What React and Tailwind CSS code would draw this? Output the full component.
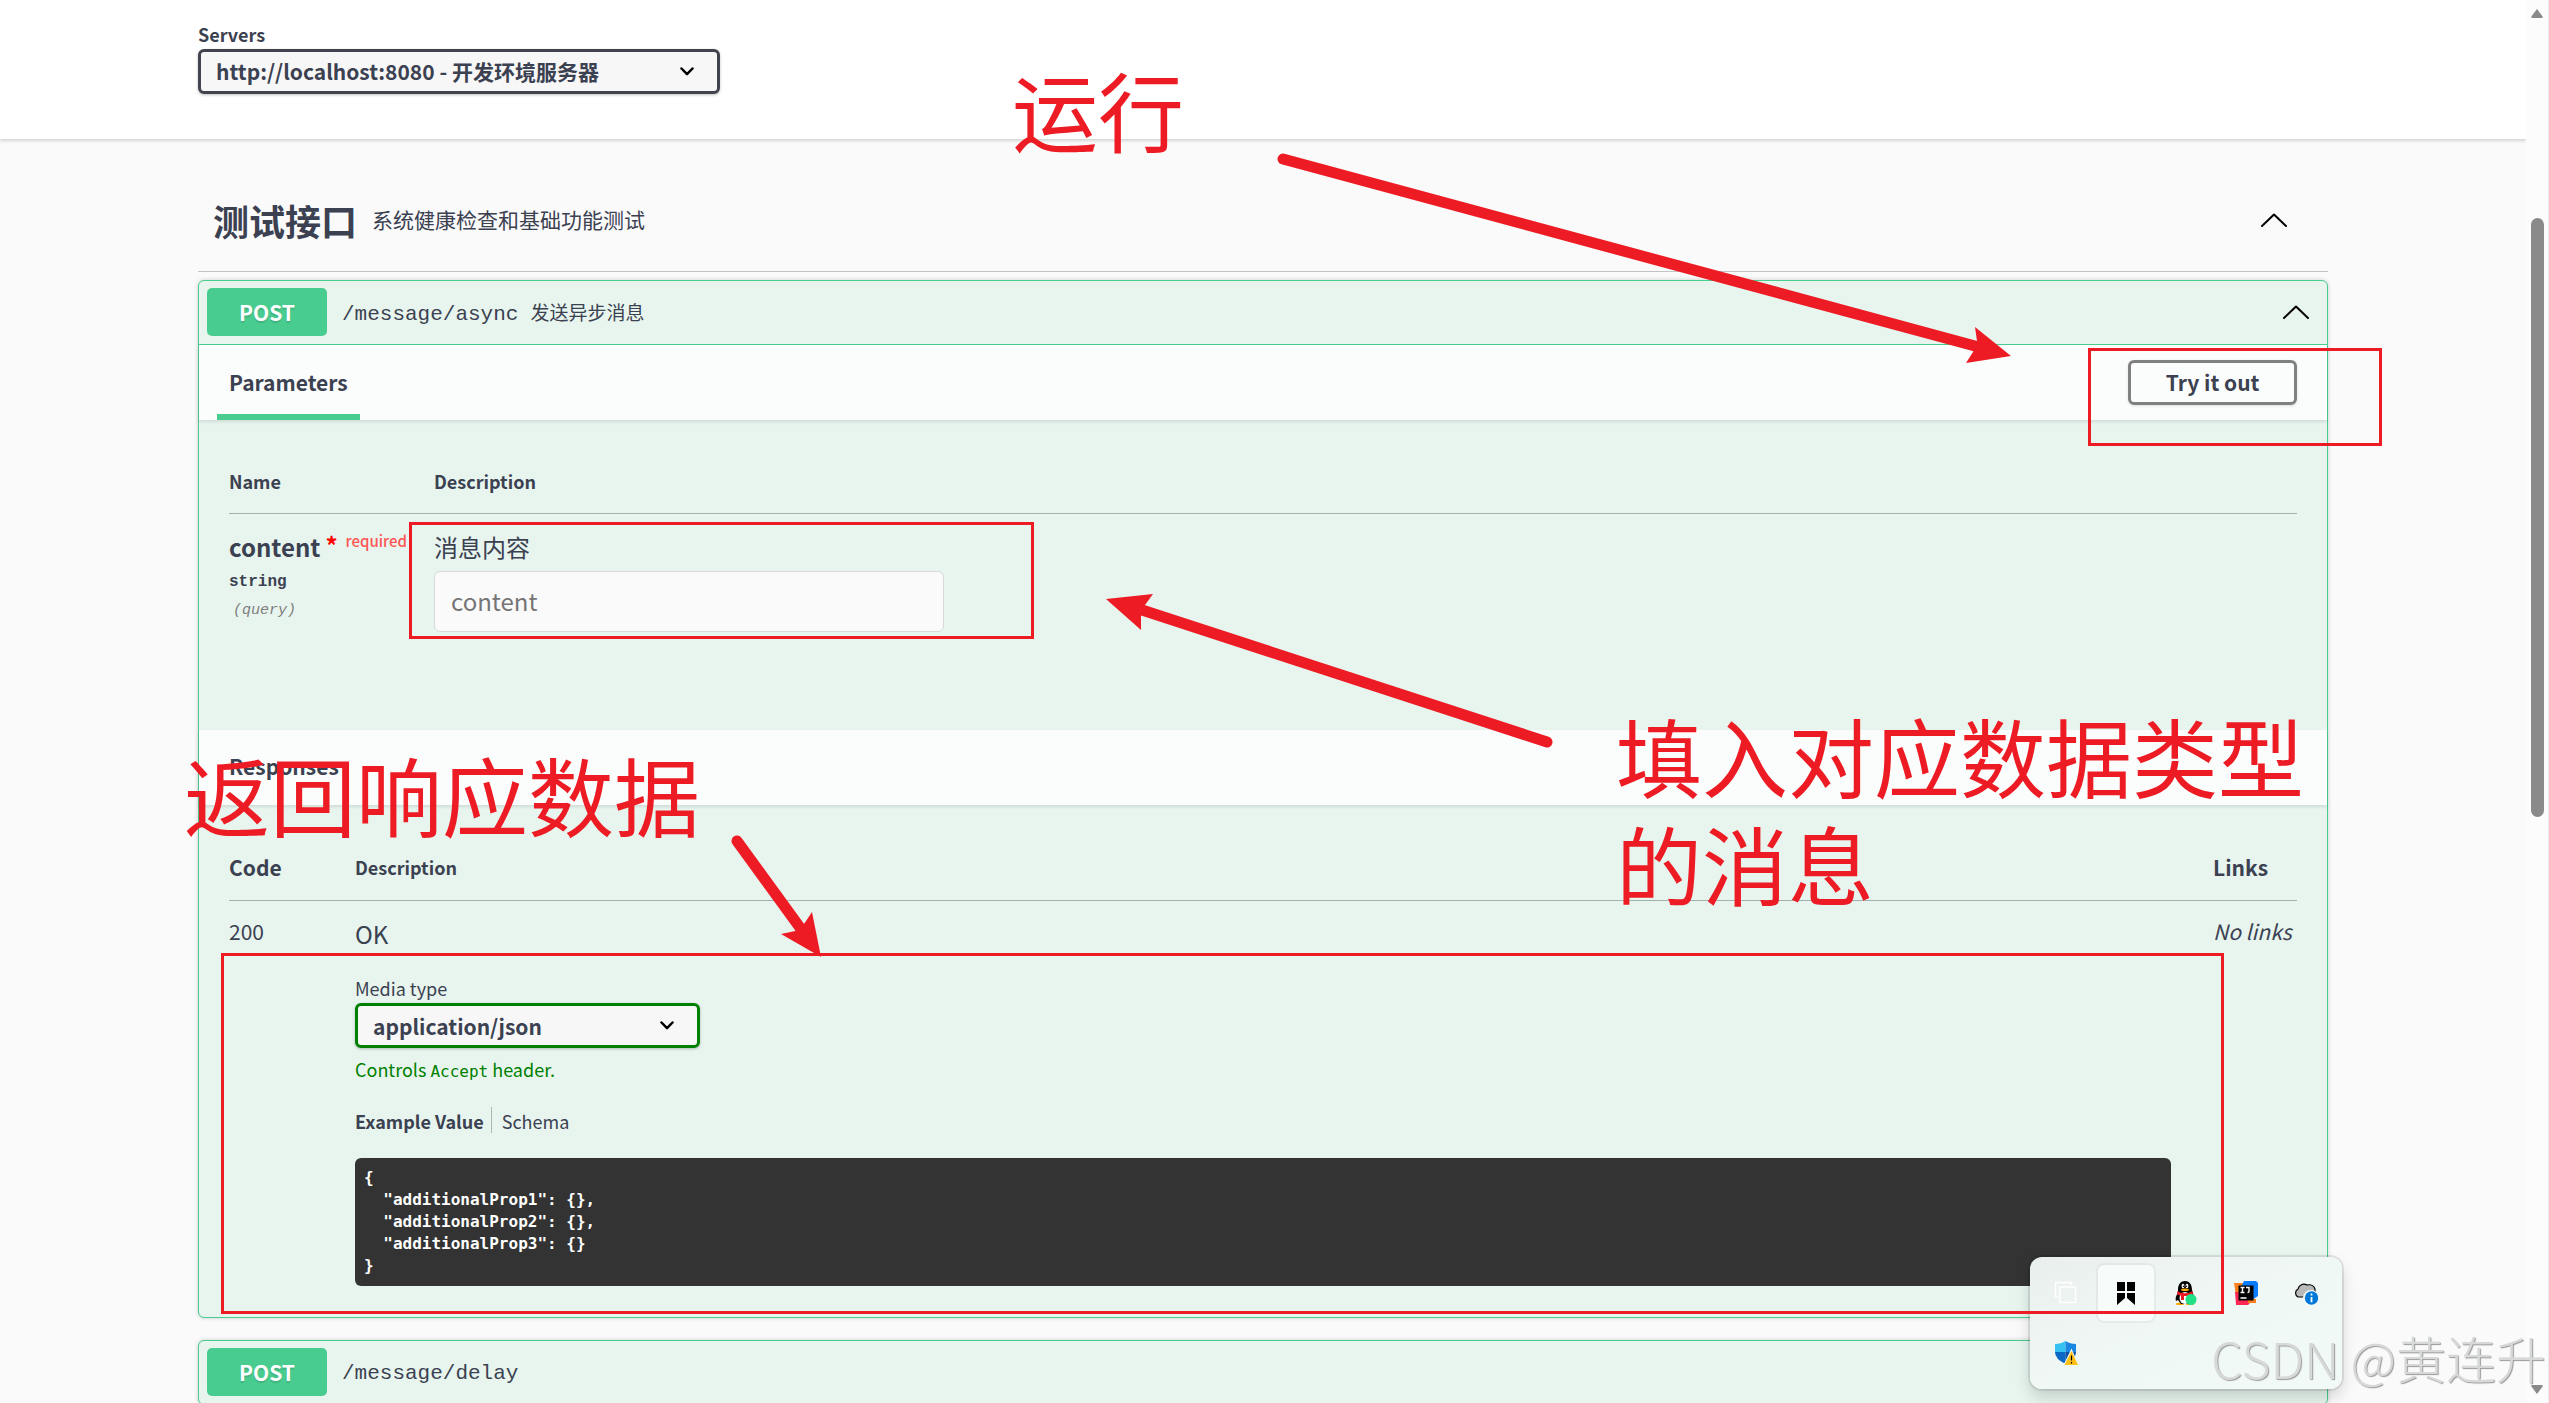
const exampleValue = `{
  "additionalProp1": {},
  "additionalProp2": {},
  "additionalProp3": {}
}`;

function ArrowUp() {
  return (
    <svg className="h-[14px] w-[26px]" viewBox="0 0 26 14" fill="none" stroke="#000" strokeWidth="2" strokeLinecap="round" strokeLinejoin="round">
      <path d="M1 13 13 1.5 25 13" />
    </svg>
  );
}

function Select({ id, value, className }) {
  return (
    <div className={`relative ${className}`}>
      <select
        id={id}
        className="h-[45px] w-full appearance-none rounded-md border-3 border-inherit bg-[#f7f7f7] pt-px pr-14 pl-[15px] text-[21px] font-bold shadow-[0_1px_3px_rgba(0,0,0,0.25)]"
      >
        <option>{value}</option>
      </select>
      <svg className="pointer-events-none absolute right-[26px] top-[18px] h-[9px] w-[14px]" viewBox="0 0 14 9" fill="none" stroke="#000" strokeWidth="2.5" strokeLinecap="round" strokeLinejoin="round">
        <path d="M1.5 1.5 7 7.2l5.500-5.700" />
      </svg>
    </div>
  );
}

function Summary({ path, description, open }) {
  return (
    <div className={`flex items-center pt-[7px] pr-[18px] pb-2 pl-2 ${open ? 'border-b border-[#49cc90]' : ''}`}>
      <button className="h-12 w-[120px] rounded-[5px] bg-[#49cc90] pt-px text-[21px] font-bold text-white [text-shadow:0_2px_1px_rgba(0,0,0,0.12)]">POST</button>
      <div className="ml-[15px] flex items-baseline gap-3 pt-1">
        <span className="font-['Liberation_Mono',monospace] text-[21px]">{path}</span>
        <span className="text-[19px]">{description}</span>
      </div>
      <button className="ml-auto" aria-label="toggle operation">
        <ArrowUp />
      </button>
    </div>
  );
}

function SectionHeader({ children }) {
  return (
    <div className="flex h-[75px] items-center justify-between bg-white/80 pr-[30px] pl-[18px] shadow-[0_2px_3px_rgba(0,0,0,0.1)]">
      {children}
    </div>
  );
}

function Parameters() {
  return (
    <>
      <SectionHeader>
        <h4 className="flex h-full items-center px-3 text-[21px] font-bold shadow-[inset_0_-6px_0_#49cc90]">Parameters</h4>
        <button className="h-[45px] w-[169px] rounded-md border-3 border-[#808080] text-[21px] font-bold shadow-[0_1px_3px_rgba(0,0,0,0.12)]">Try it out</button>
      </SectionHeader>
      <div className="px-[30px] pt-[30px] pb-[98px]">
        <table className="w-full text-left">
          <thead>
            <tr className="h-[63px] border-b border-[#a3b1ae] text-lg">
              <th className="w-[205px] font-bold">Name</th>
              <th className="font-bold">Description</th>
            </tr>
          </thead>
          <tbody>
            <tr className="align-top">
              <td className="pt-[15px]">
                <div className="flex text-2xl leading-9 font-bold whitespace-nowrap">
                  <label htmlFor="content">content</label>
                  <span className="ml-[5px] leading-8 text-[#f00]">*</span>
                  <span className="ml-2 text-[15px] leading-6 font-medium text-[#f55]">required</span>
                </div>
                <div className="mt-[5px] font-['Liberation_Mono',monospace] text-base leading-6 font-bold">string</div>
                <div className="mt-[5px] pl-1 font-['Liberation_Mono',monospace] text-[15px] leading-6 text-[#808080] italic">(query)</div>
              </td>
              <td className="pt-[15px]">
                <p className="text-2xl leading-9">消息内容</p>
                <input
                  id="content"
                  type="text"
                  placeholder="content"
                  className="mt-[6px] block h-[61px] w-[510px] rounded-md border border-[#d9d9d9] bg-[#fafafa] px-4 pb-px text-2xl placeholder:text-[#757575]"
                />
              </td>
            </tr>
          </tbody>
        </table>
      </div>
    </>
  );
}

function Responses() {
  return (
    <>
      <SectionHeader>
        <h4 className="px-3 text-[21px] font-bold">Responses</h4>
      </SectionHeader>
      <div className="px-[30px] pt-[30px] pb-[31px]">
        <table className="w-full text-left">
          <thead>
            <tr className="h-[66px] border-b border-[#a3b1ae] text-[21px]">
              <th className="w-[126px] font-bold">Code</th>
              <th className="text-lg font-bold">Description</th>
              <th className="w-[84px] font-bold">Links</th>
            </tr>
          </thead>
          <tbody>
            <tr className="align-top text-[21px] leading-[30px]">
              <td className="pt-[15px]">200</td>
              <td className="pt-[15px] pr-[42px]">
                <p className="text-2xl leading-9">OK</p>
                <label htmlFor="media-type" className="mt-6 block text-lg leading-6">Media type</label>
                <Select id="media-type" value="application/json" className="mt-[3px] w-[345px] border-[#008000]" />
                <p className="mt-[9px] text-lg leading-6 text-[#008000]">
                  Controls <code className="font-['DejaVu_Sans_Mono',monospace] text-base leading-6">Accept</code> header.
                </p>
                <div className="mt-[23px] flex h-[26px] items-center text-lg">
                  <button className="h-full pr-[7px] font-bold">Example Value</button>
                  <button className="h-full border-l border-[#a9b8b3] pl-[10px]">Schema</button>
                </div>
                <pre className="mt-[25px] rounded-md bg-[#333] px-[9px] py-[9px] font-['DejaVu_Sans_Mono',monospace] text-base leading-[22px] font-bold text-white">
                  {exampleValue}
                </pre>
              </td>
              <td className="pt-[15px] whitespace-nowrap italic">No links</td>
            </tr>
          </tbody>
        </table>
      </div>
    </>
  );
}

function Scrollbar() {
  return (
    <div className="flex w-[23px] shrink-0 flex-col items-center justify-between border-r border-[#ebebeb] bg-[#fcfcfc] pt-[9px] pb-[9px]">
      <svg className="h-[9px] w-3" viewBox="0 0 12 9" fill="#8a8a8a">
        <path d="M6 0 12 8 11 9H1L0 8z" />
      </svg>
      <div className="mt-[200px] h-[599px] w-[13px] rounded-full bg-[#8a8a8a]" />
      <svg className="mt-auto h-[9px] w-3" viewBox="0 0 12 9" fill="#8a8a8a">
        <path d="M6 9 12 1 11 0H1L0 1z" />
      </svg>
    </div>
  );
}

function Tray() {
  return (
    <div className="absolute right-[207px] bottom-[14px] grid grid-cols-[repeat(5,60px)] grid-rows-[repeat(2,60px)] place-items-center rounded-xl bg-linear-to-br from-[#e9efec] via-[#f0f8f5] to-[#f2faf7] p-[6px] shadow-[0_0_0_2px_rgba(0,0,0,0.09),0_8px_16px_rgba(0,0,0,0.16)]">
      <svg className="size-6" viewBox="0 0 24 24" fill="none" stroke="#fff" strokeWidth="1.500">
        <path d="M4 16H1.500V1.500H17V4M6 6h15.500v15.500H6z" />
      </svg>
      <div className="flex size-[56px] items-center justify-center rounded-md bg-[#f7fbfa] shadow-[0_0_0_2px_rgba(0,0,0,0.04)]">
        <svg className="size-6" viewBox="0 0 24 24">
          <path d="M3 1h8v9H3zM13 1h8v9h-8zM3 12h8v5l-8 7zM13 12h8v12l-8-7z" />
        </svg>
      </div>
      <svg className="size-6" viewBox="0 0 24 24">
        <ellipse cx="6" cy="23" rx="4" ry="1.500" fill="#f9a602" />
        <ellipse cx="16" cy="23" rx="4" ry="1.500" fill="#f9a602" />
        <path d="M4 9C4 3 7 0 11 0s7 3 7 9l2 7-2 3-4 4H7l-3-4-2 1c-1-3 0-5 2-8z" fill="#000" />
        <ellipse cx="11" cy="17" rx="5.500" ry="6" fill="#fff" />
        <ellipse cx="9" cy="5" rx="1.400" ry="2.200" fill="#fff" />
        <ellipse cx="13" cy="5" rx="1.400" ry="2.200" fill="#fff" />
        <circle cx="9.400" cy="5.200" r=".7" />
        <circle cx="12.600" cy="5.200" r=".7" />
        <ellipse cx="11" cy="8.800" rx="4" ry="1.300" fill="#f9a602" />
        <path d="M3.500 10c4 3 11 3 15 0l.5 3c-3 2-6 2-9 2v4H7v-4.500c-1.500 0-3-.5-4-1.500z" fill="#eb1923" />
        <circle cx="17" cy="18.500" r="5.500" fill="#20df84" />
      </svg>
      <svg className="size-6" viewBox="0 0 24 24">
        <path d="M0 2h9v9L2 15z" fill="#fc801d" />
        <path d="M1 11h8l9 9-4 4H2z" fill="#fe2857" />
        <path d="M14 18h8v4h-8z" fill="#fc801d" />
        <path d="M10 0h12l2 2v13l-6 4L6 8z" fill="#087cfa" />
        <path d="M4.500 4.500h15v15h-15z" />
        <path d="M6.500 6.500h4M8.500 6.500v5M6.500 11.500h4M12 6.500h3v4q0 1-1.500 1M6.500 17h6" fill="none" stroke="#fff" strokeWidth="1.400" />
      </svg>
      <svg className="size-6" viewBox="0 0 24 24">
        <path d="M4 16a4.500 4.500 0 0 1 0-8C5 4 9 2 13 4c4-1 7 1 8 4v8z" fill="#b9b9b9" stroke="#000" strokeWidth="1.200" />
        <circle cx="17" cy="17" r="8" fill="#f2faf7" />
        <circle cx="17.500" cy="17" r="6.700" fill="#0078d7" />
        <path d="M17.500 12.600v1.900M17.500 16v5.200" stroke="#fff" strokeWidth="1.800" />
      </svg>
      <svg className="size-6" viewBox="0 0 24 24">
        <path d="M1 3q6 0 10.500-3v11H1z" fill="#35c1f1" />
        <path d="M22 3Q16 3 11.500 0v11H22z" fill="#1a86e0" />
        <path d="M1 11h10.500v12Q1 18 1 11z" fill="#0b68c4" />
        <path d="M22 11H11.500v12Q22 18 22 11z" fill="#0a4fa3" />
        <path d="M17.500 7.500 25 25H9z" fill="#f2faf7" />
        <path d="M17.500 10 24 24H10.500z" fill="#fdc116" />
        <path d="M17.500 14.500v5M17.500 21v1.500" stroke="#000" strokeWidth="1.200" />
      </svg>
    </div>
  );
}

// Red markers and notes on top of the page
function Annotations() {
  return (
    <div className="pointer-events-none absolute inset-0 text-[86px] leading-[108px] text-[#ed1c24]">
      <svg className="absolute inset-0 size-full" fill="#ed1c24" stroke="none">
        <g fill="none" stroke="#ed1c24" strokeWidth="3">
          <rect x="2089.500" y="349.500" width="291" height="95" />
          <rect x="410.500" y="523.500" width="622" height="114" />
          <rect x="222.500" y="954.500" width="2000" height="358" />
        </g>
        <g stroke="#ed1c24" strokeWidth="11" strokeLinecap="round">
          <path d="M1283 159 1975 346" />
          <path d="M1547 742 1142 610" />
          <path d="M737 841 801 929" />
        </g>
        <path d="M2011 356 1975 327 1977 341 1973 352 1966 363z" />
        <path d="M1106 599 1153 594 1145 605 1141 616V630z" />
        <path d="M821 957 812 912 804 924 795 931 781 934z" />
      </svg>
      <p className="absolute top-[55px] left-[1012px]">运行</p>
      <p className="absolute top-[701px] left-[1616px] w-[700px]">填入对应数据类型的消息</p>
      <p className="absolute top-[740px] left-[184px]">返回响应数据</p>
    </div>
  );
}

export default function App() {
  return (
    <div className="relative flex h-screen overflow-hidden bg-[#fafafa] font-['Noto_Sans_CJK_SC',sans-serif] text-[#3b4151]">
      <div className="min-w-0 flex-1">
        <header className="bg-white pt-[22px] pb-[45px] shadow-[0_2px_3px_rgba(0,0,0,0.15)]">
          <div className="mx-auto max-w-[2190px] px-[30px]">
            <label htmlFor="servers" className="block text-lg leading-6 font-bold">Servers</label>
            <Select id="servers" value="http://localhost:8080 - 开发环境服务器" className="mt-[3px] w-[522px] border-[#41444e]" />
          </div>
        </header>

        <main className="mx-auto max-w-[2190px] px-[30px] pt-[31px]">
          <div className="flex h-[102px] items-center border-b border-[#c0c2c5] pr-[41px] pb-px pl-[15px]">
            <h3 className="text-4xl font-bold">测试接口</h3>
            <small className="ml-[15px] text-[21px]">系统健康检查和基础功能测试</small>
            <button className="ml-auto" aria-label="toggle section">
              <ArrowUp />
            </button>
          </div>

          <div className="mt-2 rounded-md border border-[#49cc90] bg-[#e7f5ee] shadow-[0_0_4px_rgba(0,0,0,0.19)]">
            <Summary path="/message/async" description="发送异步消息" open />
            <Parameters />
            <Responses />
          </div>

          <div className="mt-[22px] rounded-md border border-[#49cc90] bg-[#e7f5ee] shadow-[0_0_4px_rgba(0,0,0,0.19)]">
            <Summary path="/message/delay" />
          </div>
        </main>
      </div>

      <Scrollbar />
      <Tray />
      <Annotations />
      <p className="pointer-events-none absolute right-[3px] bottom-[9px] text-[50px] leading-[74px] font-light text-[#d6d9d8] [text-shadow:1px_1px_1px_#9a9a9a]">CSDN @黄连升</p>
    </div>
  );
}
